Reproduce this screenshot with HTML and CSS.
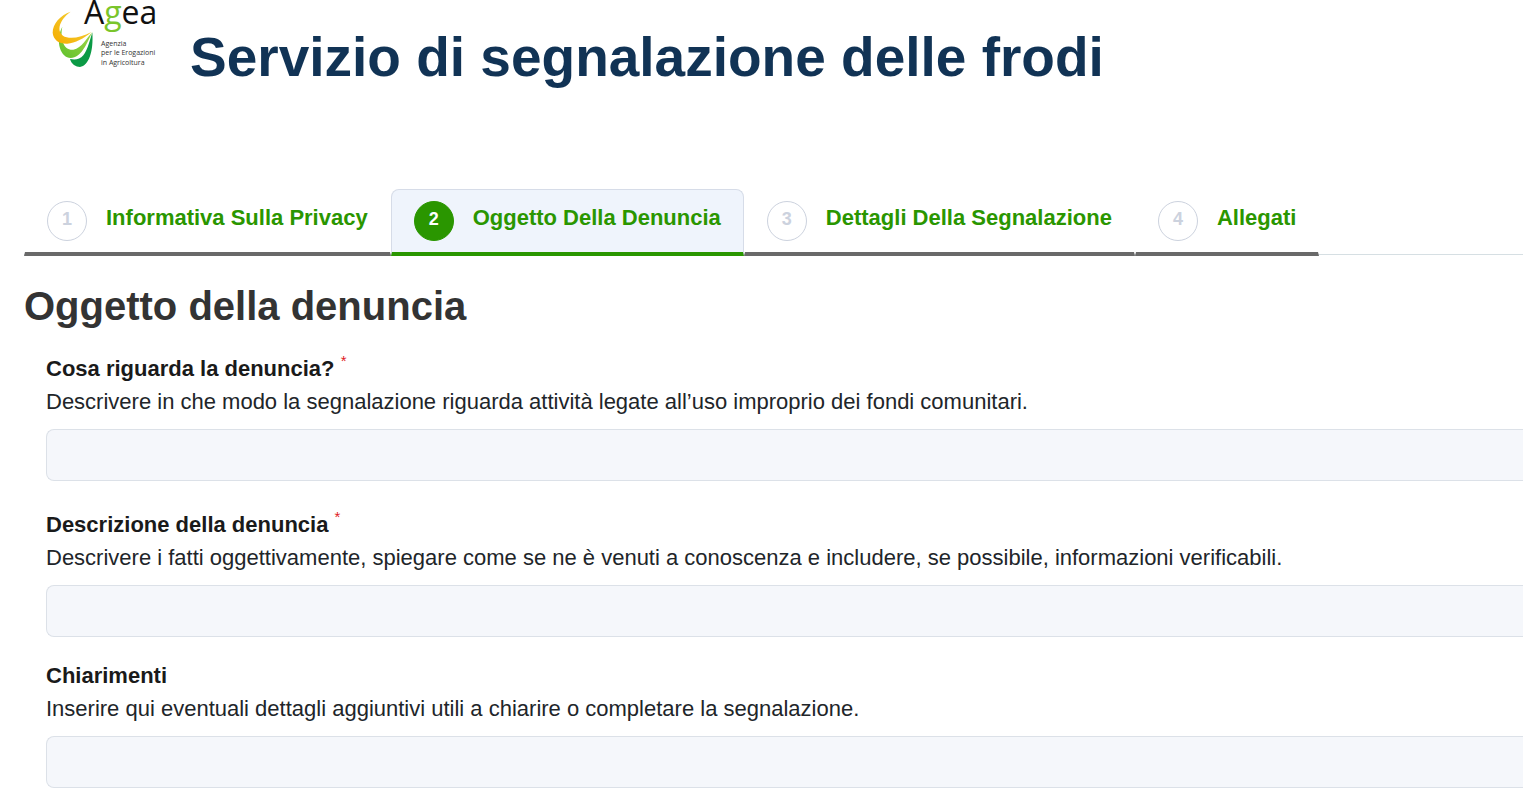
FILE: index.html
```html
<!DOCTYPE html>
<html lang="it">
<head>
<meta charset="utf-8">
<meta name="viewport" content="width=device-width, initial-scale=1">
<title>Servizio di segnalazione delle frodi</title>
<link rel="stylesheet" href="styles.css">
</head>
<body>
<header class="header">
  <svg class="logo" viewBox="24 0 140 72" role="img" aria-label="Agea">
    <defs>
      <linearGradient id="leaf-yellow" x1="0" y1="1" x2="1" y2="0">
        <stop offset="0" stop-color="#f5ac00"/>
        <stop offset="1" stop-color="#f3d640"/>
      </linearGradient>
      <linearGradient id="leaf-green" x1="0" y1="1" x2="1" y2="0">
        <stop offset="0" stop-color="#5fc02c"/>
        <stop offset="1" stop-color="#a4d848"/>
      </linearGradient>
    </defs>
    <g transform="translate(40 0) scale(.3333)">
      <path fill="#0b9a45" d="M90 177C94 193 108 201 120 201C146 198 161 155 157 97C149 122 144 148 130 166C119 179 105 180 90 177Z"/>
      <path fill="url(#leaf-green)" d="M67 80C56 100 54 125 60 145C66 163 77 174 92 174C124 173 140 132 157 96C140 114 126 144 100 149C72 152 59 118 67 80Z"/>
      <path fill="url(#leaf-yellow)" d="M92 35C60 46 38 72 38 98C40 120 58 132 82 131C105 129 132 116 154 96C128 110 100 117 80 112C46 102 54 62 92 35Z"/>
    </g>
    <text class="logo-name" x="84" y="24">A<tspan class="logo-accent">g</tspan>ea</text>
    <text class="logo-sub" x="101" y="46">Agenzia</text>
    <text class="logo-sub" x="101" y="55">per le Erogazioni</text>
    <text class="logo-sub" x="101" y="65">in Agricoltura</text>
  </svg>
  <h1 class="title">Servizio di segnalazione delle frodi</h1>
</header>
<nav class="steps" aria-label="Passaggi">
  <button class="step" type="button"><span class="step-number">1</span><span>Informativa Sulla Privacy</span></button>
  <button class="step step-active" type="button" aria-current="step"><span class="step-number">2</span><span>Oggetto Della Denuncia</span></button>
  <button class="step" type="button"><span class="step-number">3</span><span>Dettagli Della Segnalazione</span></button>
  <button class="step" type="button"><span class="step-number">4</span><span>Allegati</span></button>
</nav>
<main class="content">
  <h2 class="section-title">Oggetto della denuncia</h2>
  <form class="form">
    <div class="field">
      <label class="label label-required" for="subject">Cosa riguarda la denuncia? <sup class="mark">*</sup></label>
      <p class="hint" id="subject-hint">Descrivere in che modo la segnalazione riguarda attività legate all’uso improprio dei fondi comunitari.</p>
      <input class="input" id="subject" type="text" aria-describedby="subject-hint" required>
    </div>
    <div class="field">
      <label class="label label-required" for="description">Descrizione della denuncia <sup class="mark">*</sup></label>
      <p class="hint" id="description-hint">Descrivere i fatti oggettivamente, spiegare come se ne è venuti a conoscenza e includere, se possibile, informazioni verificabili.</p>
      <input class="input" id="description" type="text" aria-describedby="description-hint" required>
    </div>
    <div class="field">
      <label class="label" for="details">Chiarimenti</label>
      <p class="hint" id="details-hint">Inserire qui eventuali dettagli aggiuntivi utili a chiarire o completare la segnalazione.</p>
      <input class="input" id="details" type="text" aria-describedby="details-hint">
    </div>
  </form>
</main>
</body>
</html>
```
FILE: styles.css
```css
* {
  box-sizing: border-box;
}

body {
  margin: 0;
  background: #fff;
  color: #212529;
  font-family: "Liberation Sans", Arial, sans-serif;
  font-size: 22px;
  line-height: 33px;
}

.header {
  display: flex;
  align-items: flex-start;
  gap: 26px;
  padding: 0 24px 100px;
}

.logo {
  flex: none;
  width: 140px;
  height: 72px;
  overflow: visible;
}

.logo-name {
  fill: #111;
  font-family: "Open Sans", sans-serif;
  font-size: 32px;
}

.logo-accent {
  fill: #7ac52b;
}

.logo-sub {
  fill: #333;
  font-family: "Open Sans", sans-serif;
  font-size: 7px;
}

.title {
  margin: 0;
  padding-top: 25px;
  color: #113355;
  font-size: 55px;
  line-height: 64px;
}

.steps {
  display: flex;
  margin-left: 24px;
  border-bottom: 1px solid #d6dfe3;
}

.step {
  display: flex;
  align-items: baseline;
  gap: 19px;
  margin-bottom: -2px;
  padding: 11px 22px;
  border: 1px solid transparent;
  border-bottom: 4px solid #696969;
  border-radius: 8px 8px 0 0;
  background: none;
  color: #2a9600;
  font: inherit;
  font-weight: bold;
  white-space: nowrap;
}

.step-active {
  border-color: #d6dce8 #d6dce8 #2a9600;
  background: #eff4fc;
}

.step-number {
  width: 40px;
  height: 40px;
  border: 1px solid #ccd2de;
  border-radius: 50%;
  background: #fff;
  color: #ccd2de;
  font-size: 18px;
  line-height: 34px;
  text-align: center;
}

.step-active .step-number {
  border-color: #2a9600;
  background: #2a9600;
  color: #fff;
}

.content {
  padding: 27px 0 20px 24px;
}

.section-title {
  margin: 0 0 17px;
  color: #333;
  font-size: 40px;
  line-height: 48px;
}

.form {
  display: flex;
  flex-direction: column;
  gap: 22px;
  padding-left: 22px;
}

.field {
  display: flex;
  flex-direction: column;
}

.label {
  color: #1a1a1a;
  font-weight: bold;
}

.label-required {
  padding-top: 5px;
}

.mark {
  color: #e01b24;
  font-size: 15px;
  font-weight: normal;
  line-height: 0;
  vertical-align: 10px;
}

.hint {
  margin: 0 0 11px;
}

.input {
  width: 100%;
  height: 52px;
  padding: 0 12px;
  border: 1px solid #dce1e8;
  border-right: 0;
  border-radius: 8px 0 0 8px;
  background: #f5f7fb;
  color: inherit;
  font: inherit;
}
```
